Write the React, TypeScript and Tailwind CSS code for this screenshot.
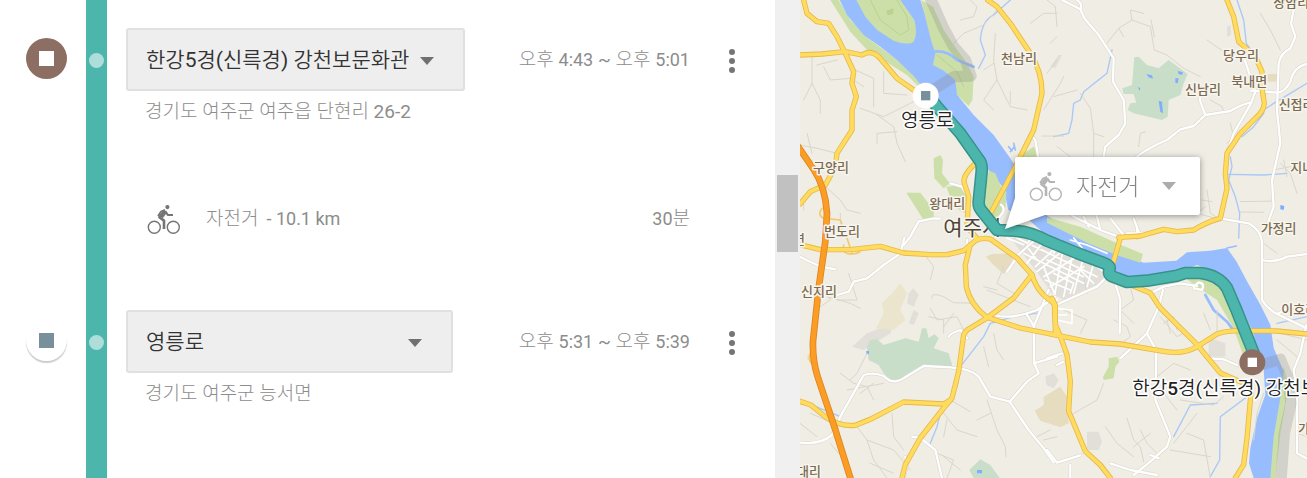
import React from 'react'

type IconProps = {
  className?: string
}

type StopProps = {
  id: string
  name: string
  address: string
  from: string
  to: string
  badge: string
  square: string
  width: string
}

type Label = {
  text: string
  x: number
  y: number
}

const stops: StopProps[] = [
  {
    id: 'museum',
    name: '한강5경(신륵경) 강천보문화관',
    address: '경기도 여주군 여주읍 단현리 26-2',
    from: '4:43',
    to: '5:01',
    badge: 'bg-[#8d6e63]',
    square: 'bg-white',
    width: 'w-[339px]',
  },
  {
    id: 'yeongneung',
    name: '영릉로',
    address: '경기도 여주군 능서면',
    from: '5:31',
    to: '5:39',
    badge: 'bg-white shadow-[0_2px_1px_rgba(0,0,0,0.2)]',
    square: 'bg-[#78909c]',
    width: 'w-[327px]',
  },
]

const highways = [
  'M20 0L30 40L60 65L95 70L120 110L145 160L170 215L165 250L178 290L165 330L165 390L120 460L115 500L85 555L40 575L9 612',
  'M9 165L75 162L145 155L195 165Q220 148 245 170L300 235L350 270',
  'M572 0L600 20L640 70L700 160Q735 215 735 280L710 390L650 510L578 645',
  'M530 495Q495 530 502 550L515 590L510 680L540 715',
  'M9 734L70 749L160 749L250 739L320 759L400 764L450 764L500 752L535 722Q555 712 580 717L660 774L705 824L650 894L570 954L510 990L500 1004L485 1114L465 1194L440 1224L370 1314L325 1394L315 1434',
  'M520 734L505 794L508 860Q520 915 570 952L670 984L770 1004L880 1026L970 1032L1100 1054Q1160 1064 1200 1040L1260 1002Q1290 990 1350 992L1440 993L1530 1002',
  'M705 824Q715 860 740 885L775 914L775 1000',
  'M765 895L772 910L775 974L790 1009L810 1064L820 1144L815 1234L865 1354L910 1395L940 1434',
  'M9 1204L40 1214L90 1254Q130 1280 175 1276L220 1258L320 1206L440 1212L460 1200',
  'M1000 854L1060 879L1090 924L1140 974L1200 1034L1270 1119L1350 1154L1362 1180L1350 1314L1340 1394L1315 1434',
  'M1290 0L1310 50L1325 125L1375 170L1395 215L1395 265L1402 310Q1400 335 1375 355L1330 400L1290 460L1285 520L1290 565L1270 655Q1230 665 1190 690L1140 695L1100 688L1030 708L965 712',
  'M970 714L948 790',
]

const whiteRoads = [
  'M795 0L850 28L862 55L905 105L950 175L948 245L980 300L985 370L965 405L925 440L920 470',
  'M850 28Q858 12 840 0',
  'M1490 30L1482 70L1495 110L1480 145Q1450 160 1445 190L1440 330L1450 430L1425 540L1430 620L1412 670',
  'M1530 192Q1490 200 1480 245Q1465 275 1440 278L1360 272',
  'M1020 470Q1060 440 1110 420L1150 388L1190 378L1225 345L1300 333Q1340 310 1362 308',
  'M1225 345L1210 305L1208 265',
  'M1330 140L1350 200L1375 275L1362 310L1310 400L1290 460',
  'M1270 655L1355 670Q1390 690 1395 725L1395 900Q1410 925 1440 942L1530 985',
  'M1395 780Q1430 790 1470 770L1530 762',
  'M1440 942L1465 930',
  'M1528 975L1510 1060L1490 1110L1500 1180L1500 1360L1530 1376',
  'M9 770Q60 800 115 808',
  'M322 714L310 760L260 795L210 835L170 845L155 875L120 885',
  'M9 1328Q70 1335 105 1305L130 1250L200 1125Q230 1115 260 1128Q285 1155 315 1138L380 1098L460 1102Q520 1105 545 1130L580 1190L638 1205L695 1290L740 1345L770 1388',
  'M638 1205L690 1145L725 1120L712 1090L710 980L755 870',
  'M710 1090L780 1070',
  'M590 945Q640 960 720 930L775 890',
  'M690 945L712 980',
  'M345 1310L370 1314L415 1350L435 1434',
  'M325 1370L330 1400L320 1434',
  'M365 664L340 710L320 735M365 664L410 655L430 656',
  'M630 815L665 764L720 714',
  'M515 755L510 720',
  'M455 1010Q460 1000 490 990L510 1015',
  'M460 550L495 560L515 595M612 614Q626 625 616 640L600 660',
  'M700 405L715 420L725 480',
  'M955 850L970 900L968 1000',
  'M770 918L900 860L940 820',
  'M1060 880L1100 860L1150 850L1200 858M1098 870L1085 920L1050 1000L1078 1052L1075 1200L1120 1310L1110 1340L1060 1385L1010 1425',
  'M1050 1000L970 1075',
  'M1235 1075L1280 1078L1320 1095',
  'M750 1350L780 1388L850 1366M820 1395L820 1434',
  'M940 1390L1000 1410L1080 1425M1060 1365L1085 1375',
  'M750 1075L795 1060M780 1095L800 1085',
  'M1190 865L1215 870Q1225 850 1205 847L1190 860',
  'M770 600L830 650L910 690L970 712M860 650L875 680M895 630L910 690M940 655L985 712M990 700L1060 700M1010 655L1030 710M1020 680L1020 714',
]

const lanes = [
  'M45 170L45 250L70 300L70 340M45 250L20 300',
  'M9 435L60 445L120 460M30 400L45 460',
  'M175 210L230 235L230 320M260 215L260 280L330 285M200 260L160 235L100 240L80 200M120 180L60 195',
  'M190 325L260 350L360 300M240 345L290 380L300 430L325 485M240 430L240 400L300 395',
  'M85 560L130 600L150 630L190 640M20 590L20 630M130 640L130 690',
  'M470 130L500 100L560 75L600 30M490 60L530 50L540 20L520 0',
  'M595 100L590 180L600 240L640 320L690 330M590 190L560 210M600 240L560 300L590 330M640 275L640 310',
  'M740 330L790 250L800 230M750 220L780 180M700 70L740 40L780 40M735 408L800 408',
  'M750 0L775 20L780 80M760 130L780 110',
  'M930 130L965 85L1005 60L1060 80L1072 150L1110 165L1160 205L1210 230M965 85L980 110M1005 60L1000 30L1040 40M1230 120L1280 155L1330 180M1072 110L1062 60',
  'M850 280L880 325L890 400L890 470M770 290L840 270M890 400L920 410M780 440L820 470M1025 440L1030 400L1045 395',
  'M1240 300L1275 320L1280 335M1300 370L1310 410L1290 430M1330 605L1430 603M1330 636L1400 637',
  'M1390 40L1420 90L1450 150M1450 490L1480 520L1500 580M1430 510L1480 500M1460 480L1470 530',
  'M1230 570L1240 640L1265 655M1215 600L1245 605M1225 620L1200 640L1255 655',
  'M380 760L410 800L400 840M405 895Q400 875 440 890L470 908L540 910M620 800L600 850L650 880M560 860L600 870M570 870L700 920',
  'M395 950L440 960L440 1000M400 925L420 960L480 950L500 990M440 980L470 940',
  'M155 820L180 900L120 900M90 890L160 910L190 925M70 920L100 900L80 870',
  'M130 1120L170 1150L210 1160L230 1200M160 1140L180 1120L210 1060M150 1170L260 1150M190 1180L230 1150',
  'M40 1240L110 1270M9 1270L60 1310M180 1280L210 1320L230 1380L270 1434M210 1320L290 1350L340 1410M100 1330L150 1390M220 1390L290 1420',
  'M285 1240L290 1310L320 1350M440 1240L480 1290L540 1310M450 1260L440 1310M570 1200L600 1290L625 1340L627 1370M580 1240L540 1260M460 1200L520 1235M420 1360L470 1380L450 1434M440 1370L490 1410',
  'M720 1310L760 1290M740 1320L780 1310M590 1000L600 1050L620 1080M560 1040L575 1100',
  'M790 770L860 830L870 880M800 930L870 960L850 1000M960 1040L1000 1010L990 980L950 960M1000 860L1010 900L970 930L1010 970',
  'M1090 950L1140 1010L1160 1000M1100 970L1130 950L1140 990M1120 1000L1110 960',
  'M830 1240L900 1200L920 1150M1080 1130L1130 1090L1180 1110M1100 1180L1140 1230M990 1255L1010 1320L1030 1340L1040 1385M925 1280L960 1330L1010 1370M1030 1290L1050 1330L1080 1360M1010 1340L1060 1300',
  'M1120 1350L1240 1370M1150 1200L1250 1215L1280 1190M1170 1300L1220 1320L1240 1434M1130 1330L1200 1240',
  'M1220 940L1240 990M1260 930L1260 1000M1400 1180L1380 1240L1370 1320',
  'M1400 730L1440 760M1450 1000L1530 1020M1500 1300L1530 1310M1440 1020L1500 1070',
]

// Downtown blocks along the river
const cityStreets = [
  'M660 714L900 830M700 714L690 740L720 780M680 760L860 850M715 800L780 740M690 790L740 724M720 815L800 750',
  'M740 830L840 770M740 800L780 900M760 860L860 800M800 740L770 900M830 750L800 890M860 770L830 880M890 790L870 860',
  'M750 780L860 830M745 840L820 870M770 820L830 850L820 880M630 714L680 734M850 810L890 850M900 800L940 830',
  'M775 925L825 930L825 970L780 960M780 945L810 945',
  'M820 720L870 735L930 760M830 714L860 750M790 720L770 760',
]

const creeks = [
  'M640 0L590 45Q555 60 550 120L565 165L545 205',
  'M945 150L930 220L860 275L850 300L830 310L825 360L815 400L770 410',
  'M1320 0L1340 60L1348 130L1390 190L1405 290L1400 340L1370 380L1335 410',
  'M1300 470L1305 500L1295 540L1315 590L1328 640L1325 714',
  'M1290 523L1400 525L1470 520M1400 330L1430 310L1530 250',
  'M730 938L650 950L580 970L560 1010L490 1100L480 1160',
  'M430 1240L420 1280L400 1330M9 1200L130 1250',
  'M1130 1310L1180 1215L1260 1210M1350 1190L1270 1250L1268 1380L1240 1430',
  'M1440 970L1530 950',
]

const villages: Label[] = [
  { text: '천남리', x: 612, y: 189 },
  { text: '구양리', x: 48, y: 516 },
  { text: '왕대리', x: 397, y: 625 },
  { text: '번도리', x: 81, y: 709 },
  { text: '면', x: -12, y: 733 },
  { text: '신지리', x: 12, y: 888 },
  { text: '대리', x: 0, y: 1428 },
  { text: '장암리', x: 1429, y: 21 },
  { text: '당우리', x: 1278, y: 181 },
  { text: '북내면', x: 1303, y: 258 },
  { text: '신남리', x: 1164, y: 281 },
  { text: '신접리', x: 1445, y: 328 },
  { text: '지내리', x: 1480, y: 516 },
  { text: '가정리', x: 1391, y: 698 },
  { text: '이호리', x: 1453, y: 942 },
  { text: '가남리', x: 1503, y: 1300 },
]

const route =
  'M395 290L420 320L490 400L545 478Q556 490 554 515L545 605Q544 620 552 630L600 690L650 692Q700 694 750 722L840 759L920 789Q943 797 937 810Q933 824 945 829L990 846L1050 842L1140 827L1165 819L1210 819Q1265 825 1290 864L1320 934L1370 1059'

function BikeIcon({ className }: IconProps) {
  return (
    <svg viewBox="0 0 34 31" className={className} aria-hidden="true">
      <g fill="none" stroke="currentColor" strokeLinejoin="round">
        <circle cx="7.3" cy="23.3" r="6" strokeWidth="1.4" />
        <circle cx="26.3" cy="23.3" r="6" strokeWidth="1.4" />
        <path d="M17.8 6.8L12.4 13.2L17 16.6V25" strokeWidth="2.6" />
        <path d="M18.2 7.2L20.8 11H26" strokeWidth="2.2" />
        <path d="M18 7.5L14 13" strokeWidth="4.4" />
        <path d="M11 12L14 7.5L18 5.8" strokeWidth="1.8" />
      </g>
      <circle cx="20.4" cy="3.1" r="2.1" fill="currentColor" />
    </svg>
  )
}

function Caret({ className }: IconProps) {
  return (
    <svg viewBox="0 0 14 8" className={className} aria-hidden="true">
      <path d="M0 0H14L7 8Z" fill="currentColor" />
    </svg>
  )
}

function Stop({ id, name, address, from, to, badge, square, width }: StopProps) {
  return (
    <li className="grid grid-cols-[86px_21px_1fr]">
      <div className="pt-[38px] pl-[26px]">
        <div className={`flex size-[41px] items-center justify-center rounded-full ${badge}`}>
          <span className={`size-[15px] ${square}`} />
        </div>
      </div>
      <div className="flex justify-center bg-[#4db6ac] pt-[53px]">
        <span className="size-[15px] rounded-full bg-[#aeded9]" />
      </div>
      <div className="pt-7 pl-[19px]">
        <div className="flex items-center">
          <div className={`relative ${width}`}>
            <select
              id={id}
              aria-label="장소"
              className="h-[63px] w-full appearance-none rounded-[3px] border-2 border-[#e0e0e0] bg-[#eeeeee] pt-0.5 pl-[18px] font-['Roboto','Noto_Sans_CJK_KR_DemiLight','Noto_Sans_CJK_KR',sans-serif] text-[21px] font-normal text-[#333333]"
            >
              <option>{name}</option>
            </select>
            <Caret className="pointer-events-none absolute top-[29px] right-[31px] h-2 w-3.5 text-[#707070]" />
          </div>
          <span className="ml-auto pt-0.5 pr-[30px] whitespace-nowrap">
            오후 <span className="text-[18px]">{from}</span> ~ 오후 <span className="text-[18px]">{to}</span>
          </span>
          <button type="button" aria-label={`${name} 메뉴`} className="mr-[31px] flex w-6 justify-center pt-0.5">
            <svg viewBox="0 0 6 24" className="h-6 w-1.5 fill-[#757575]">
              <circle cx="3" cy="3" r="3" />
              <circle cx="3" cy="12" r="3" />
              <circle cx="3" cy="21" r="3" />
            </svg>
          </button>
        </div>
        <p className="pl-[19px] leading-[42px]">{address}</p>
      </div>
    </li>
  )
}

function Leg() {
  return (
    <li className="grid h-[149px] grid-cols-[86px_21px_1fr]">
      <div />
      <div className="bg-[#4db6ac]" />
      <div className="flex items-center pt-6 pr-[85px] pl-10">
        <BikeIcon className="h-[31px] w-[34px] text-[#757575]" />
        <p className="flex items-baseline gap-2 pl-[25px]">
          <span>자전거</span>
          <span className="text-[18px]">- 10.1 km</span>
        </p>
        <span className="ml-auto">
          <span className="text-[18px]">30</span>분
        </span>
      </div>
    </li>
  )
}

function MapCanvas() {
  return (
    <svg
      viewBox="9 0 1521 1434"
      preserveAspectRatio="xMinYMin slice"
      className="absolute inset-0 h-full w-full bg-[#efede4]"
      strokeLinecap="round"
      strokeLinejoin="round"
    >
      {/* hills and built-up ground */}
      <g fill="#e2dfd8">
        <path d="M165 1040L210 1000L290 970L280 1000L200 1050Z" />
        <path d="M335 880L350 865L365 885L350 920L330 910Z" />
        <path d="M335 970L350 930L365 940L350 975Z" />
        <path d="M1235 1025L1250 1018L1285 1030L1285 1070L1235 1070Z" />
        <path d="M870 1295L905 1295L915 1325L905 1350L870 1350Z" />
        <path d="M640 714L760 714L940 795L940 835L800 900L765 880L715 810Z" />
        <path d="M745 1130L770 1120L785 1140L770 1165L748 1155Z" />
        <path d="M1290 80L1300 75L1303 105L1290 110Z" />
        <path d="M760 200L785 165L795 165L775 205Z" />
      </g>
      <g fill="#ece5cd">
        <path d="M285 880L310 850L330 880L310 930L325 960L290 990L240 985L230 1000L260 940L255 910Z" />
        <path d="M567 770L585 762L650 760L640 800L620 822L590 795Z" fill="#e6dcc0" />
        <path d="M713 1232L740 1215L740 1190L790 1160L810 1190L815 1270L790 1282L730 1262Z" fill="#e6dcc0" />
        <path d="M1412 222H1440V245H1412Z" fill="#e6dcc0" />
        <path d="M30 1065H60V1080H30Z" />
      </g>

      {/* woods */}
      <g fill="#c8dec9">
        <path d="M1012 172L1025 170L1050 195L1085 205L1115 180L1172 222L1160 250L1150 285L1115 300L1112 350L1095 360L1010 340L992 330L1000 310L1018 308L1010 282L980 282L976 265L1005 255Z" />
        <path d="M210 1040L220 1020L240 1018L260 1035L325 1015L365 1025L375 985L388 985L395 1015L412 1003L425 1015L410 1045L455 1060L467 1100L380 1097L315 1137L285 1142L260 1120L245 1095L215 1080Z" />
        <path d="M517 1410L550 1378L580 1395L608 1434H530Z" />
      </g>
      <g fill="#ccdfa8">
        <path d="M410 475L430 465L438 480L435 520L458 550L440 565L412 535Z" />
        <path d="M328 578L370 578L410 630L410 655L380 660Z" />
        <path d="M448 560L500 555L515 600L505 640L470 620Z" />
        <path d="M680 460L710 440L730 470V500H670Z" />
        <path d="M935 1075L960 1070L967 1085L955 1100L950 1135L920 1140L918 1130L935 1100Z" />
        <path d="M100 0L125 0L160 60L220 120L300 180L380 245L370 265L330 225L210 150L160 95Z" />
        <path d="M1140 815Q1250 770 1310 850L1380 1010L1385 1070L1340 1070L1310 985L1260 900L1200 860Z" />
        <path d="M1460 1100L1475 1160L1450 1300L1435 1434H1415L1430 1260Z" />
      </g>

      {/* Namhan river */}
      <path
        fill="#98bdff"
        d="M128 0L150 45L200 105L250 140L300 180L350 228L400 290L470 370L530 460L575 510L620 565L634 630L690 655L770 725L920 800L950 830L1140 820L1200 795L1250 812L1310 880L1370 1000L1380 1060L1400 1110L1405 1184L1380 1254L1360 1344L1356 1390L1370 1434H1420L1430 1310L1450 1194L1460 1114L1430 1044L1420 974L1390 914L1350 844L1318 784L1290 744L1240 752L1170 757L1138 782L1040 788L950 754L870 720L800 680L740 640L640 475L590 405L530 345L485 290L475 240L430 170L405 125L390 60L370 0Z"
      />
      <path fill="#ccdfa8" d="M575 512L595 520L612 560L628 575L626 620L600 670L556 625Z" />
      <path fill="#ccdfa8" d="M178 0L205 50L240 90L290 122Q335 138 350 125Q363 100 352 60L310 0Z" />
      <path fill="#ccdfa8" d="M372 0L408 20L440 90L470 135L510 190L530 230L526 300L515 318L480 285L475 240L440 212L408 195L415 160L402 120Z" />
      <path fill="none" stroke="#b9d28f" strokeWidth="3" d="M220 0L250 60L310 105L335 90L330 50L300 0M420 165L480 215L500 260" />
      <path fill="#b9d28f" d="M268 32L290 25L288 42L272 46Z" />
      <path fill="#ccdfa8" d="M750 652L850 680L960 730L1038 762L1030 788L960 766L870 728L750 668Z" />
      <path fill="none" stroke="#98bdff" strokeWidth="8" d="M410 155Q450 150 480 180L530 200M1225 885L1250 930L1290 965L1305 985" />
      <path fill="none" stroke="#98bdff" strokeWidth="5" d="M635 440L645 452M650 430L655 450M640 455L652 440M1290 744L1318 738" />

      <g fill="none" stroke="#a9c8f7" strokeWidth="4">
        {creeks.map((d) => (
          <path key={d} d={d} />
        ))}
      </g>
      <g fill="#7faeff">
        <path d="M1048 222L1065 226L1068 236L1055 232ZM1085 302L1095 305L1098 340L1090 335ZM1135 235L1145 235L1142 250L1135 248ZM1142 213L1158 217L1155 225L1145 222ZM1022 260L1030 265L1028 273Z" />
        <path d="M540 1410H555V1420H540ZM1450 615L1462 618L1460 630L1450 628ZM208 1053H216V1062H208Z" />
      </g>

      <g fill="none" stroke="#dad6cc" strokeWidth="3">
        {lanes.map((d) => (
          <path key={d} d={d} />
        ))}
      </g>
      <g fill="none" stroke="#ffffff" strokeWidth="5">
        {cityStreets.map((d) => (
          <path key={d} d={d} />
        ))}
      </g>
      <g fill="none" stroke="#d9d5cb" strokeWidth="10">
        {whiteRoads.map((d) => (
          <path key={d} d={d} />
        ))}
      </g>
      <g fill="none" stroke="#ffffff" strokeWidth="7">
        {whiteRoads.map((d) => (
          <path key={d} d={d} />
        ))}
      </g>

      <path fill="none" stroke="#f3c96b" strokeWidth="5" d="M75 625Q60 645 80 655L130 660Q145 690 120 690M140 735Q135 765 165 762Q195 760 195 740M150 714L165 760M40 1060Q30 1080 50 1095" />
      <g fill="none" stroke="#e7b84a" strokeWidth="16">
        {highways.map((d) => (
          <path key={d} d={d} />
        ))}
      </g>
      <g fill="none" stroke="#ffdc5e" strokeWidth="11">
        {highways.map((d) => (
          <path key={d} d={d} />
        ))}
      </g>
      <g fill="none">
        <path stroke="#dd8420" strokeWidth="20" d="M0 435L50 508Q85 560 90 640L85 724L65 864L48 1024Q46 1080 62 1130L110 1274L162 1440" />
        <path stroke="#fb9d24" strokeWidth="15" d="M0 435L50 508Q85 560 90 640L85 724L65 864L48 1024Q46 1080 62 1130L110 1274L162 1440" />
      </g>

      <g
        className="font-['Roboto','Noto_Sans_CJK_KR',sans-serif] font-medium"
        fontSize="39"
        fill="#7c6b51"
        stroke="#f7f5ef"
        strokeWidth="9"
        paintOrder="stroke"
      >
        {villages.map((label) => (
          <text key={label.text} x={label.x} y={label.y}>
            {label.text}
          </text>
        ))}
        <text x="439" y="705" fontSize="63" fill="#4d4538" className="font-normal">
          여주시
        </text>
      </g>

      {/* travelled before and after this leg */}
      <g fill="none" stroke="#8a8a8a" strokeOpacity="0.28">
        <path strokeWidth="34" d="M398 -10L440 85L470 140L505 180L522 228L470 230L400 275" />
        <path strokeWidth="34" d="M1375 1100L1450 1078L1472 1130L1482 1210L1462 1300L1452 1440" />
      </g>
      <path fill="none" stroke="#37938a" strokeWidth="38" d={route} />
      <path fill="none" stroke="#4db6ac" strokeWidth="29" d={route} />

      <circle cx="386" cy="287" r="39" fill="#ffffff" />
      <path d="M372 273H400V301H372Z" fill="#78909c" />
      <circle cx="1366" cy="1087" r="39" fill="#8d6e63" />
      <path d="M1352 1073H1380V1101H1352Z" fill="#ffffff" />
      <g
        className="font-['Roboto','Noto_Sans_CJK_KR_DemiLight','Noto_Sans_CJK_KR',sans-serif] font-normal"
        fontSize="57"
        fill="#222222"
        stroke="#ffffff"
        strokeWidth="9"
        paintOrder="stroke"
      >
        <text x="312" y="381">
          영릉로
        </text>
        <text x="1006" y="1184">
          한강<tspan className="font-medium">5</tspan>경(신륵경) 강천보문화관
        </text>
      </g>
    </svg>
  )
}

function ModePopup() {
  return (
    <div className="absolute top-[157px] left-[215px] w-[185px] drop-shadow-[0_1px_3px_rgba(0,0,0,0.4)]">
      <svg viewBox="0 0 46 32" className="absolute top-[41px] -left-3 h-8 w-[46px] fill-white">
        <path d="M12 0L2 31L42 17L42 0Z" />
      </svg>
      <div className="relative flex items-center rounded-xs bg-white">
        <BikeIcon className="pointer-events-none absolute left-3.5 h-[31px] w-[34px] text-[#b5b5b5]" />
        <select
          id="mode"
          aria-label="이동 수단"
          className="h-[58px] w-full appearance-none bg-transparent pt-1 pl-[61px] text-[23px] text-[#858585]"
        >
          <option>자전거</option>
        </select>
        <Caret className="pointer-events-none absolute right-6 h-2 w-3.5 text-[#acacac]" />
      </div>
    </div>
  )
}

export default function App() {
  return (
    <div className="flex h-screen overflow-hidden bg-white font-['Roboto','Noto_Sans_CJK_KR_Light','Noto_Sans_CJK_KR',sans-serif] text-[19px] text-[#8c8c8c]">
      <main className="flex w-[800px] shrink-0">
        <ol className="flex min-w-0 flex-1 flex-col">
          <Stop {...stops[0]} />
          <Leg />
          <Stop {...stops[1]} />
          <li className="grid flex-1 grid-cols-[86px_21px_1fr]">
            <div />
            <div className="bg-[#4db6ac]" />
          </li>
        </ol>
        <div className="w-[25px] bg-[#f0f0f0] px-0.5 pt-[175px]">
          <div className="h-[77px] bg-[#c1c1c1]" />
        </div>
      </main>
      <section className="relative min-w-0 flex-1 overflow-hidden">
        <MapCanvas />
        <ModePopup />
      </section>
    </div>
  )
}
